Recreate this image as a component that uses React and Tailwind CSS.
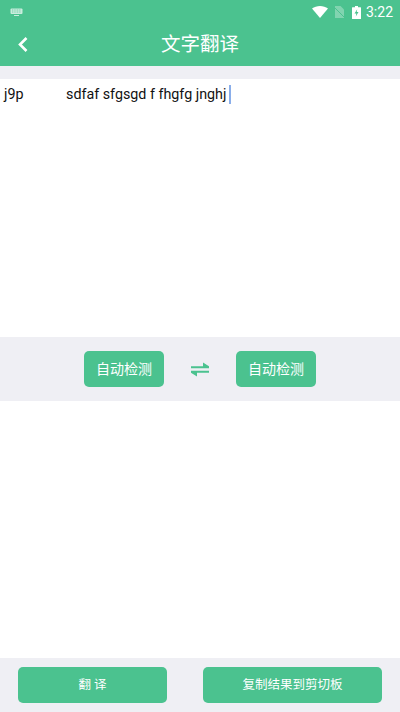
const fontStack = "font-['Roboto','Noto_Sans_CJK_SC',sans-serif]";

function StatusBar() {
  return (
    <div className="flex h-[24px] items-center justify-between pl-[10px] pr-[7px] text-white">
      <svg width="13" height="8" viewBox="0 0 13 8" className="opacity-70">
        <rect x="0.5" y="0.5" width="12" height="5.5" rx="1" fill="#fff" />
        <path d="M2 2h9M2 4h9" stroke="#4bc28f" strokeWidth="0.7" strokeDasharray="1 0.7" />
        <path d="M4 7.5h5" stroke="#fff" strokeWidth="1" />
      </svg>
      <div className="flex items-center">
        <svg width="16" height="12" viewBox="0 0 16 12">
          <path d="M0 2.6C2.2 0.9 5 0 8 0s5.800 0.900 8 2.600L8 12z" fill="#fff" />
        </svg>
        <svg width="11" height="12" viewBox="0 0 11 12" className="ml-[6px]">
          <path d="M1 12V0h5.500L10 3.500V12z" fill="#fff" fillOpacity="0.3" />
          <path d="M0 1l10.500 10.500" stroke="#4bc28f" strokeWidth="1" />
        </svg>
        <svg width="9" height="13" viewBox="0 0 9 13" className="ml-[7px]">
          <path
            d="M3 0h3v1.300h2.500a.5.5 0 0 1 .5.500V12.500a.5.5 0 0 1-.5.500H.5a.5.5 0 0 1-.5-.5V1.800a.5.5 0 0 1 .5-.5H3z"
            fill="#fff"
          />
          <path d="M5.200 3.200L2.500 7.400h1.800L3.800 10.400l2.700-4.300H4.700z" fill="#4bc28f" />
        </svg>
        <span className="ml-[5px] text-[14px] leading-none">3:22</span>
      </div>
    </div>
  );
}

function GreenButton({ className, children }) {
  return (
    <button
      type="button"
      className={`flex h-[36px] items-center justify-center rounded-[5px] bg-[#4bc28f] text-white ${className}`}
    >
      {children}
    </button>
  );
}

export default function App() {
  return (
    <div className={`flex h-[712px] w-[400px] flex-col overflow-hidden bg-white ${fontStack}`}>
      <header className="h-[66px] shrink-0 bg-[#4bc28f]">
        <StatusBar />
        <div className="relative flex h-[42px] items-center justify-center">
          <svg
            width="12"
            height="17"
            viewBox="0 0 12 17"
            className="absolute left-[17px] top-[12px]"
          >
            <path d="M9.500 2L3 8.500l6.500 6.500" fill="none" stroke="#fff" strokeWidth="2.600" />
          </svg>
          <h1 className="text-[19.500px] font-normal leading-none text-white">文字翻译</h1>
        </div>
      </header>

      <div className="h-[13px] shrink-0 bg-[#efeff4]" />

      <div className="flex h-[258px] shrink-0 items-start pl-[4px] pt-[6px] text-[14.300px] leading-[18px] text-[#111]">
        <span className="whitespace-pre">j9p            sdfaf sfgsgd f fhgfg jnghj</span>
        <span className="ml-[3px] h-[19px] w-[2px] bg-[#8aaeea]" />
      </div>

      <div className="flex h-[64px] shrink-0 items-center justify-center bg-[#efeff4]">
        <GreenButton className="w-[80px] text-[14px]">自动检测</GreenButton>
        <svg width="18" height="15" viewBox="0 0 18 15" className="mx-[27px]">
          <path d="M0 4.300h18v1.900H0zM18 4.300L12 .5v3.800zM0 8.800h18v1.900H0zM0 10.700l6 3.800v-3.800z" fill="#4bc28f" />
        </svg>
        <GreenButton className="w-[80px] text-[14px]">自动检测</GreenButton>
      </div>

      <div className="flex-1" />

      <div className="flex h-[54px] shrink-0 items-center justify-between bg-[#efeff4] pl-[18px] pr-[18px]">
        <GreenButton className="w-[149px] text-[12.500px]">翻 译</GreenButton>
        <GreenButton className="w-[179px] text-[12.500px]">复制结果到剪切板</GreenButton>
      </div>
    </div>
  );
}
